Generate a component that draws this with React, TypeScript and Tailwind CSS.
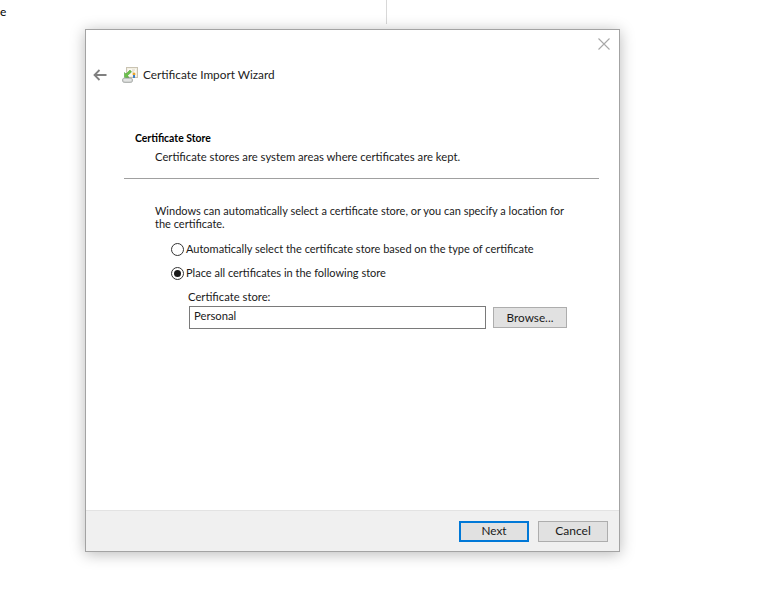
import React from 'react';

function CertIcon() {
  return (
    <svg width="16" height="16" viewBox="0 0 16 16" className="shrink-0">
      <rect x="4.5" y="0.5" width="11" height="10" fill="#f3efe2" stroke="#c9c3b2" />
      <rect x="6" y="2" width="8" height="7" fill="#fbf9f2" />
      <path d="M10 3h3M10 5h2" stroke="#d9d4c4" />
      <circle cx="12" cy="7" r="1.5" fill="#e8a52c" />
      <rect x="11" y="8" width="2" height="3" fill="#3f7fc4" />
      <path d="M8 3 L4 7 L2.5 5.5 L2.5 10.5 L7 10.5 L5.5 8.5 L9.5 5 Z" fill="#6cc04a" stroke="#3f9a2e" strokeWidth="0.5" />
      <path d="M0.5 12.5 Q0.5 11 3 11 H8 Q10.5 11 10.5 12.5 V14 Q10.5 15.5 8 15.5 H3 Q0.5 15.5 0.5 14 Z" fill="#d2d4d2" stroke="#8f9490" strokeWidth="0.6" />
      <path d="M2 13 H9" stroke="#f4f4f4" />
    </svg>
  );
}

function Radio({ checked, label }: { checked?: boolean; label: string }) {
  return (
    <div className="flex items-center h-[16px]">
      <span className="w-[13px] h-[13px] rounded-full border border-[#333333] bg-white flex items-center justify-center shrink-0">
        {checked && <span className="w-[7px] h-[7px] rounded-full bg-[#1a1a1a]" />}
      </span>
      <span className="ml-[2px] text-[11px] leading-[16px] text-[#1a1a1a]">{label}</span>
    </div>
  );
}

export default function App() {
  return (
    <div className="relative w-[758px] h-[597px] bg-white overflow-hidden font-['Lato','Open_Sans',sans-serif] text-[11.25px] text-[#1a1a1a]">
      <span className="absolute left-0 top-[4px] text-[12px] leading-[16px] text-black">e</span>
      <div className="absolute left-[386px] top-0 w-px h-[24px] bg-[#d8d8d8]" />

      <div className="absolute left-[85px] top-[29px] w-[535px] h-[523px] bg-white border border-[#a3a3a3] shadow-[0_2px_14px_rgba(0,0,0,0.28)] flex flex-col">
        <div className="flex justify-end pt-[8px] pr-[9px] h-[30px]">
          <svg width="12" height="12" viewBox="0 0 12 12">
            <path d="M0.5 0.5 L11.5 11.5 M11.5 0.5 L0.5 11.5" stroke="#a8a8a8" strokeWidth="1.1" fill="none" />
          </svg>
        </div>

        <div className="flex items-center h-[30px] pl-[7px]">
          <svg width="14" height="12" viewBox="0 0 14 12" className="shrink-0">
            <path d="M13.5 6 H1.5 M6.5 1 L1.5 6 L6.5 11" stroke="#808080" strokeWidth="1.8" fill="none" />
          </svg>
          <div className="ml-[15px]"><CertIcon /></div>
          <span className="ml-[5px] text-[11.8px] leading-[18px] text-[#222222]">Certificate Import Wizard</span>
        </div>

        <div className="pt-[41px] pl-[49px] text-[10.4px] leading-[14px] font-bold text-black">Certificate Store</div>
        <div className="pt-[4px] pl-[69px] leading-[16px]">Certificate stores are system areas where certificates are kept.</div>
        <div className="mt-[13px] mx-[38px] h-px bg-[#a0a0a0] w-[475px]" />

        <div className="pt-[25px] pl-[69px] w-[490px] text-[11px] leading-[13px]">
          Windows can automatically select a certificate store, or you can specify a location for the certificate.
        </div>

        <div className="pl-[85px] pt-[11px] flex flex-col gap-[8px]">
          <Radio label="Automatically select the certificate store based on the type of certificate" />
          <Radio checked label="Place all certificates in the following store" />
        </div>

        <div className="pl-[102px] pt-[8px] leading-[16px]">Certificate store:</div>
        <div className="pl-[103px] pt-[1px] flex items-center">
          <div className="w-[297px] h-[23px] border border-[#7a7a7a] pl-[4px] leading-[18px] bg-white">Personal</div>
          <button className="ml-[7px] w-[74px] h-[21px] border border-[#adadad] bg-[#e1e1e1] text-[11.75px] leading-[17px] text-[#1a1a1a]">Browse...</button>
        </div>

        <div className="mt-auto h-[41px] bg-[#f0f0f0] border-t border-[#e3e3e3] flex items-center justify-end pr-[11px] gap-[9px]">
          <button className="w-[70px] h-[21px] border-2 border-[#0078d7] bg-[#e1e1e1] text-[11.75px] leading-[16px]">Next</button>
          <button className="w-[70px] h-[21px] border border-[#adadad] bg-[#e1e1e1] text-[12px] leading-[18px]">Cancel</button>
        </div>
      </div>
    </div>
  );
}
